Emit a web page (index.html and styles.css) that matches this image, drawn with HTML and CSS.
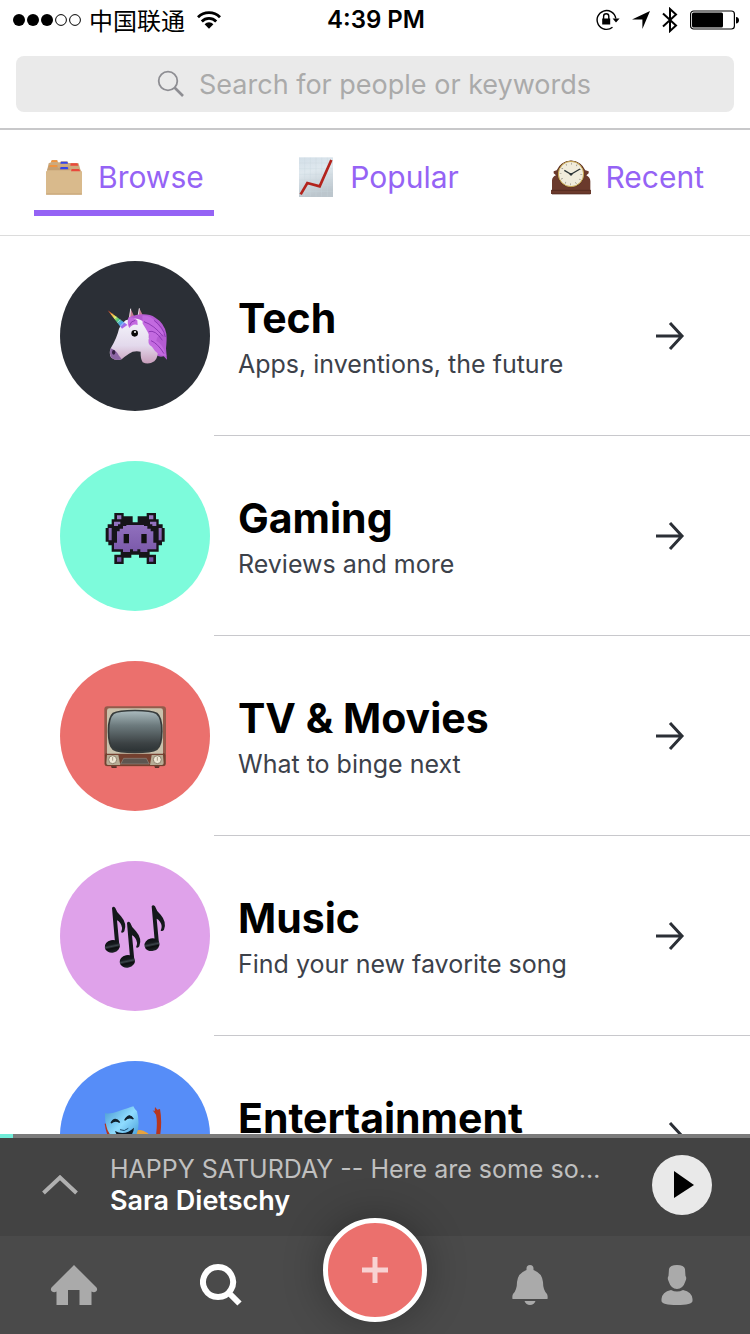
FILE: index.html
```html
<!DOCTYPE html>
<html lang="en">
<head>
    <meta charset="UTF-8">
    <meta name="viewport" content="width=device-width, initial-scale=1.0">
    <title>Browse</title>
    <link rel="stylesheet" href="styles.css">
</head>
<body>
    <!-- status bar -->
    <div class="status">
        <div class="status-left">
            <svg width="68" height="12" viewBox="0 0 68 12">
                <circle cx="6" cy="6" r="6"/>
                <circle cx="20" cy="6" r="6"/>
                <circle cx="34" cy="6" r="6"/>
                <circle cx="48" cy="6" r="5.4" fill="none" stroke="#000"/>
                <circle cx="62" cy="6" r="5.4" fill="none" stroke="#000"/>
            </svg>
            <span class="carrier" lang="zh-CN">中国联通</span>
            <svg width="24" height="20" viewBox="0 0 24 20">
                <path d="M1 7.2a15.6 15.6 0 0 1 22 0M4.8 11.4a10.2 10.2 0 0 1 14.4 0" fill="none" stroke="#000" stroke-width="2.8"/>
                <path d="M7.6 14.2a6.2 6.2 0 0 1 8.8 0L12 18.8z"/>
            </svg>
        </div>
        <span class="time">4:39 PM</span>
        <div class="status-right">
            <svg width="24" height="22" viewBox="0 0 24 22">
                <path d="M16.5 18.2A9.4 9.4 0 1 1 19.8 9.5" fill="none" stroke="#000" stroke-width="1.4"/>
                <path d="M16.6 9.4H23.6L20 13.4zM6.2 9.4h8v6h-8z"/>
                <path d="M7.6 10V7.4a2.6 2.6 0 0 1 5.2 0V10" fill="none" stroke="#000" stroke-width="1.4"/>
            </svg>
            <svg width="18" height="18" viewBox="0 0 18 18">
                <path d="M18 0L10.400 18V8.600H0z"/>
            </svg>
            <svg width="16" height="26" viewBox="0 0 16 26">
                <path d="M1 6.500L14 18.500L8 24V2L14 7.500L1 19.500" fill="none" stroke="#000" stroke-width="2"/>
            </svg>
            <svg width="49" height="20" viewBox="0 0 49 20">
                <rect x=".6" y="1" width="43.800" height="18" rx="3" fill="none" stroke="#000" stroke-width="1.200"/>
                <rect x="2" y="2.500" width="31" height="15" rx="1.500"/>
                <path d="M46 7c4 0 4 6.500 0 6.500z"/>
            </svg>
        </div>
    </div>

    <!-- search -->
    <div class="search">
        <label class="search-box">
            <svg width="28" height="28" viewBox="0 0 28 28" fill="none" stroke="#8e8e93">
                <circle cx="11" cy="11" r="9.300" stroke-width="1.800"/>
                <path d="M17.500 17.500L26 26" stroke-width="2.600"/>
            </svg>
            <input type="text" placeholder="Search for people or keywords" aria-label="Search">
        </label>
    </div>

    <!-- tabs -->
    <nav class="tabs">
        <a href="#" class="tab current">
            <svg viewBox="129 81 120 120">
                <path d="M150 97L153 90H168L171 97H177L180 94H199L202 99H232L235 107L239 122H138L143 100z" fill="#cdaa7d"/>
                <path d="M138 122L144 106H168L171 114H174L178 110H202L207 119H238L243 128H135z" fill="#c49f72"/>
                <path d="M135 126L139 121H239L243 126V194H135z" fill="#d9ba8c"/>
                <path d="M152 91h17v5h-19zM147 105h22v6h-25z" fill="#ef9440"/>
                <path d="M180 95h19l2 6h-23zM179 111h21l2 7h-25z" fill="#3344ec"/>
                <path d="M209 100h20l3 7h-24zM212 117h22l4 7h-28z" fill="#e9483b"/>
                <path d="M136 192h106" stroke="#c5a478" stroke-width="3"/>
            </svg>
            <span>Browse</span>
        </a>
        <a href="#" class="tab">
            <svg viewBox="891 81 120 120">
                <defs>
                    <linearGradient id="paper" x1="0" y1="0" x2="0.2" y2="1">
                        <stop offset="0" stop-color="#d3dfe8"/>
                        <stop offset=".4" stop-color="#dfe8ee"/>
                        <stop offset="1" stop-color="#bcc6cd"/>
                    </linearGradient>
                </defs>
                <rect x="900" y="82" width="102" height="119" fill="url(#paper)"/>
                <path d="M917 83V200M934 83V200M951 83V200M968 83V200M985 83V200M901 99H1001M901 116H1001M901 133H1001M901 150H1001M901 167H1001M901 184H1001" stroke="#c9d5dd" stroke-width="1"/>
                <path d="M905 193L925 159L962 169L997 90" fill="none" stroke="#b3231c" stroke-width="8"/>
            </svg>
            <span>Popular</span>
        </a>
        <a href="#" class="tab">
            <svg viewBox="522 81 120 120">
                <path d="M522 181L525 179V151Q526 140 537 136L530 130V124L539 121A46 46 0 0 1 625 121L635 124V130L628 136Q640 142 640 154V179L642 181V192H522z" fill="#6b3a2c"/>
                <path d="M523 181H641M525 192H640" stroke="#4a241b" stroke-width="2"/>
                <circle cx="582" cy="132" r="40" fill="#4f2b1d"/>
                <circle cx="582" cy="132" r="38" fill="#f1ecdc" stroke="#c6a44c" stroke-width="3"/>
                <circle cx="582" cy="132" r="31" fill="none" stroke="#77736a" stroke-width="6" stroke-dasharray="1.500 14.730"/>
                <path d="M562 121L582 133L609 117" fill="none" stroke="#2c3436" stroke-width="4"/>
                <circle cx="582" cy="133" r="4" fill="#2c3436"/>
            </svg>
            <span>Recent</span>
        </a>
    </nav>

    <!-- categories -->
    <ul class="list">
        <li>
            <a href="#" class="row">
                <span class="circle tech">
                    <svg viewBox="24 27 192 192">
                        <defs>
                            <linearGradient id="horn" x1="0" y1="0" x2="1" y2="1">
                                <stop offset="0" stop-color="#d92c2c"/>
                                <stop offset=".2" stop-color="#f09a35"/>
                                <stop offset=".35" stop-color="#ece85a"/>
                                <stop offset=".5" stop-color="#59cf77"/>
                                <stop offset=".7" stop-color="#4fa4f2"/>
                                <stop offset=".85" stop-color="#b45be6"/>
                                <stop offset="1" stop-color="#fff"/>
                            </linearGradient>
                            <linearGradient id="neck" x1="0" y1="0" x2="0" y2="1">
                                <stop offset="0" stop-color="#f5f6fb"/>
                                <stop offset=".6" stop-color="#e3d9ec"/>
                                <stop offset="1" stop-color="#c79dba"/>
                            </linearGradient>
                        </defs>
                        <path d="M101 70L107 41L121 72zM128 75L133 40L146 66L143 84z" fill="#c37b92"/>
                        <path d="M107 41L104 68M133 40L128 70" stroke="#e9e2ea" stroke-width="3"/>
                        <path d="M100 68Q150 48 181 68Q208 84 214 116Q216 132 213 160L216 194L206 184Q180 190 171 160L158 128L120 84z" fill="#b45bd2"/>
                        <path d="M92 76Q125 62 148 82Q164 97 161 128Q168 150 188 164Q191 186 178 199Q160 211 143 202Q136 190 137 170Q116 166 102 176Q88 185 80 193Q62 198 49 188Q40 176 48 158Q66 128 72 101Q80 84 92 76z" fill="url(#neck)"/>
                        <path d="M47 160Q64 166 72 182L80 192Q66 199 50 189Q42 178 47 160z" fill="#8c65a4"/>
                        <ellipse cx="56" cy="172" rx="5" ry="7" fill="#352044"/>
                        <path d="M38 46L98 90L81 101z" fill="url(#horn)"/>
                        <path d="M50 59L53 56M58 70L64 65M67 83L76 74M76 94L87 82" stroke="#fff" stroke-width="2" opacity=".7"/>
                        <path d="M100 68Q112 64 127 76L128 90Q114 84 103 99Q95 84 100 68zM142 62Q168 60 184 83Q200 104 211 118Q185 116 184 138Q202 145 214 182Q188 184 171 155Q154 148 164 122Q152 99 143 86z" fill="#c36ae0"/>
                        <path d="M104 91Q107 78 121 76M147 80Q178 91 204 124M161 110Q181 103 202 136M168 137Q188 145 207 176M177 76Q205 97 211 126" fill="none" stroke="#8e39b5" stroke-width="3"/>
                        <circle cx="119" cy="115" r="10" fill="#080808"/>
                        <circle cx="120" cy="111" r="3" fill="#fff"/>
                    </svg>
                </span>
                <span class="info">
                    <span class="text">
                        <strong>Tech</strong>
                        <small>Apps, inventions, the future</small>
                    </span>
                    <svg class="arrow" viewBox="0 0 30 30"><path d="M1 15H27M15 2L27 15L15 28"/></svg>
                </span>
            </a>
        </li>
        <li>
            <a href="#" class="row">
                <span class="circle gaming">
                    <svg viewBox="39 42 192 192">
                        <defs>
                            <linearGradient id="alien" x1="0" y1="0" x2="0" y2="1">
                                <stop offset="0" stop-color="#9878c4"/>
                                <stop offset="1" stop-color="#7351a3"/>
                            </linearGradient>
                        </defs>
                        <path d="M73 69H101V79H128V97H143V79H170V69H198V88H206V103H218V114H224V155H216V166H206V185H179V194H198V222H170V203H147V194H124V203H101V222H73V194H92V185H65V166H55V155H47V114H53V103H65V88H73z" fill="#161419"/>
                        <path d="M81 76H94V88H81zM177 76H190V88H177zM72 95H91V103H84V108H72zM180 95H199V108H187V103H180zM56 114H65V151H56zM206 114H215V151H206zM81 202H94V215H81zM177 202H190V215H177zM109 105H162V108H172V116H182V124H190V158H199V178H172V186H151V178H142V184H129V178H120V186H99V178H72V158H81V124H89V116H99V108H109z" fill="url(#alien)"/>
                        <path d="M101 132H117V160H101zM154 132H170V160H154z" fill="#111"/>
                    </svg>
                </span>
                <span class="info">
                    <span class="text">
                        <strong>Gaming</strong>
                        <small>Reviews and more</small>
                    </span>
                    <svg class="arrow" viewBox="0 0 30 30"><path d="M1 15H27M15 2L27 15L15 28"/></svg>
                </span>
            </a>
        </li>
        <li>
            <a href="#" class="row">
                <span class="circle movies">
                    <svg viewBox="39 42 192 192">
                        <defs>
                            <linearGradient id="screen" x1="0" y1="0" x2="0" y2="1">
                                <stop offset="0" stop-color="#a9b9bd"/>
                                <stop offset=".35" stop-color="#6d7b7e"/>
                                <stop offset=".8" stop-color="#3c4244"/>
                                <stop offset="1" stop-color="#2c3335"/>
                            </linearGradient>
                        </defs>
                        <path d="M62 225H80V234H65zM192 225H210L207 234H195z" fill="#5d3029"/>
                        <rect x="43" y="49" width="185" height="180" rx="9" fill="#925b4b"/>
                        <rect x="45" y="189" width="181" height="39" rx="7" fill="#74402f"/>
                        <path d="M58 55H212Q219 55 219 62V191H51V62Q51 55 58 55z" fill="#c9c1ac"/>
                        <path d="M135 59Q186 59 202 68Q218 80 218 123Q218 167 202 180Q186 190 135 190Q84 190 68 180Q53 167 53 123Q53 80 68 68Q84 59 135 59z" fill="#363b3b"/>
                        <path d="M135 64Q183 64 198 72Q213 84 213 123Q213 163 198 175Q184 184 135 184Q86 184 72 175Q58 163 58 123Q58 84 72 72Q86 64 135 64z" fill="url(#screen)"/>
                        <path d="M51 195H85L91 225H54Q49 225 49 219zM185 195H219L221 219Q221 225 216 225H180z" fill="#b6ac95"/>
                        <path d="M101 205H169L178 222H92z" fill="#5d5550" stroke="#94857b" stroke-width="2"/>
                        <circle cx="68" cy="209" r="12" fill="#eee7d5" stroke="#8d816d" stroke-width="3"/>
                        <circle cx="202" cy="209" r="12" fill="#eee7d5" stroke="#8d816d" stroke-width="3"/>
                        <path d="M68 201V212M202 201V212" stroke="#a69a84" stroke-width="3"/>
                    </svg>
                </span>
                <span class="info">
                    <span class="text">
                        <strong>TV &amp; Movies</strong>
                        <small>What to binge next</small>
                    </span>
                    <svg class="arrow" viewBox="0 0 30 30"><path d="M1 15H27M15 2L27 15L15 28"/></svg>
                </span>
            </a>
        </li>
        <li>
            <a href="#" class="row">
                <span class="circle music">
                    <svg viewBox="39 42 192 192">
                        <defs>
                            <linearGradient id="note" x1="0" y1="0" x2="0" y2="1">
                                <stop offset="0" stop-color="#0a0d10"/>
                                <stop offset=".35" stop-color="#161a1e"/>
                                <stop offset=".5" stop-color="#3c454b"/>
                                <stop offset=".65" stop-color="#0a0c0e"/>
                                <stop offset="1" stop-color="#20262a"/>
                            </linearGradient>
                            <g id="quaver">
                                <path d="M66 54Q70 47 76 54Q80 68 93 79Q112 101 103 124Q99 130 93 127Q100 113 91 100Q86 93 81 91L88 166L76 168z" fill="#14181b"/>
                                <ellipse cx="67" cy="169" rx="23" ry="19" transform="rotate(-12 67 169)" fill="url(#note)"/>
                            </g>
                        </defs>
                        <use href="#quaver"/>
                        <use href="#quaver" x="119" y="-5"/>
                        <use href="#quaver" x="45" y="45"/>
                    </svg>
                </span>
                <span class="info">
                    <span class="text">
                        <strong>Music</strong>
                        <small>Find your new favorite song</small>
                    </span>
                    <svg class="arrow" viewBox="0 0 30 30"><path d="M1 15H27M15 2L27 15L15 28"/></svg>
                </span>
            </a>
        </li>
        <li>
            <a href="#" class="row">
                <span class="circle fun">
                    <svg viewBox="309 162 192 192">
                        <defs>
                            <linearGradient id="mask" x1="0" y1="0" x2="1" y2="1">
                                <stop offset="0" stop-color="#4796cf"/>
                                <stop offset=".5" stop-color="#8fdcff"/>
                                <stop offset="1" stop-color="#368fd0"/>
                            </linearGradient>
                        </defs>
                        <path d="M314 221Q317 245 330 275L340 272L322 220zM458 181L464 184L465 171L472 179L480 177Q488 220 478 270H466Q474 220 468 194z" fill="#b63620"/>
                        <path d="M400 246Q418 232 444 250L462 290H390z" fill="#e9a33c"/>
                        <path d="M315 188Q324 195 355 184Q387 173 400 169Q405 180 411 184Q421 225 410 252Q390 285 360 276Q325 260 319 228Q314 208 315 188z" fill="url(#mask)"/>
                        <path d="M333 219Q345 198 359 217Q345 208 333 219zM374 211Q388 186 400 207Q387 199 374 211z" fill="#10202c" stroke="#10202c" stroke-width="4"/>
                        <path d="M360 239Q373 246 385 235" fill="none" stroke="#19476a" stroke-width="3"/>
                        <path d="M345 243Q375 258 402 233Q399 265 370 264Q350 260 345 243z" fill="#0e1a26"/>
                    </svg>
                </span>
                <span class="info">
                    <span class="text">
                        <strong>Entertainment</strong>
                    </span>
                    <svg class="arrow" viewBox="0 0 30 30"><path d="M1 15H27M15 2L27 15L15 28"/></svg>
                </span>
            </a>
        </li>
    </ul>

    <!-- player -->
    <div class="player">
        <div class="progress"><div class="played"></div></div>
        <div class="player-inner">
            <button type="button" class="expand" aria-label="Expand">
                <svg width="36" height="20" viewBox="0 0 36 20"><path d="M1.500 18L18 2.500L34.500 18" fill="none" stroke="#b0b0b0" stroke-width="4"/></svg>
            </button>
            <div class="playing">
                <p class="track">HAPPY SATURDAY -- Here are some so…</p>
                <p class="artist">Sara Dietschy</p>
            </div>
            <button type="button" class="play" aria-label="Play">
                <svg width="20" height="28" viewBox="0 0 20 28"><path d="M0 0L20 14L0 27z"/></svg>
            </button>
        </div>
    </div>

    <!-- bottom bar -->
    <nav class="bar">
        <a href="#" aria-label="Home">
            <svg width="48" height="40" viewBox="0 0 48 40"><path d="M24 0L46.500 22.500Q48 25 46 26.500Q44 28 41.500 26.500V40H29.500V25H18V40H6.500V26.500Q4 28 2 26.500Q0 25 1.500 22.500z"/></svg>
        </a>
        <a href="#" aria-label="Search">
            <svg width="42" height="42" viewBox="0 0 42 42"><path d="M18 3a15 15 0 1 0 .1 0zM28.500 28.500L39.500 39.500" fill="none" stroke="#fff" stroke-width="6"/></svg>
        </a>
        <button type="button" class="add" aria-label="Add">
            <svg width="28" height="28" viewBox="0 0 28 28"><path d="M14 1V27M1 14H27" stroke="#f8d2d2" stroke-width="5"/></svg>
        </button>
        <a href="#" aria-label="Notifications">
            <svg width="36" height="40" viewBox="0 0 36 40"><path d="M14.500 5V3.500a3.500 3.500 0 0 1 7 0V5Q30 8 31 17Q31 25 35 29Q36 31 35.500 34H.5Q0 31 1 29Q5 25 5 17Q6 8 14.500 5zM12.500 36H23.500Q22 40 18 40Q14 40 12.500 36z"/></svg>
        </a>
        <a href="#" aria-label="Profile">
            <svg width="32" height="40" viewBox="0 0 32 40"><path d="M8 4Q9 0 16 0Q23 0 24 4L24.500 11Q26 13 24.500 16Q22 24 16 24Q10 24 7.500 16Q6 13 7.500 11zM10 25Q16 28 22 25Q31 27 31.500 34V36Q31 40 16 40Q1 40 .5 36V34Q1 27 10 25z"/></svg>
        </a>
    </nav>
</body>
</html>
```

FILE: styles.css
```css
/* reset */
*{
    margin: 0;
    padding: 0;
    box-sizing: border-box;
}

ul{
    list-style: none;
}

a{
    color: inherit;
    text-decoration: none;
}

button{
    border: none;
    background: none;
    cursor: pointer;
}

svg{
    display: block;
    flex: none;
}

body{
    height: 100vh;
    display: flex;
    flex-direction: column;
    overflow: hidden;
    background-color: #fff;
    color: #000;
    font-family: Inter, "Noto Sans CJK SC", sans-serif;
}

/* status bar */
.status{
    height: 40px;
    padding: 0 11px 0 13px;
    display: grid;
    grid-template-columns: 1fr auto 1fr;
    align-items: center;
    font-size: 24px;
    line-height: 40px;
}

.status-left,
.status-right{
    display: flex;
    align-items: center;
}

.status-left{
    gap: 8px;
}

.status-right{
    justify-content: flex-end;
    gap: 12px;
}

.carrier{
    margin-right: 4px;
    font-family: "Noto Sans CJK SC", sans-serif;
}

.time{
    font-weight: 600;
}

/* search */
.search{
    padding: 16px;
    border-bottom: 2px solid #c8c8ca;
}

.search-box{
    height: 56px;
    display: flex;
    align-items: center;
    justify-content: center;
    gap: 14px;
    border-radius: 8px;
    background-color: #eaeaea;
}

.search-box input{
    width: 394px;
    border: none;
    outline: none;
    background: none;
    font-family: inherit;
    font-size: 27px;
}

.search-box input::placeholder{
    color: #aaa;
}

/* tabs */
.tabs{
    padding: 0 36px 19px 34px;
    display: flex;
    justify-content: space-between;
    border-bottom: 1px solid #dcdcdc;
}

.tab{
    padding: 27px 10px 13px;
    display: flex;
    align-items: center;
    gap: 14px;
    border-bottom: 6px solid transparent;
    color: #9563f5;
    font-size: 30px;
    line-height: 40px;
}

.tab svg{
    width: 40px;
    height: 40px;
}

.tab.current{
    border-color: #9563f5;
}

/* categories */
.list{
    flex: 1;
    min-height: 0;
    overflow: hidden;
}

.row{
    height: 200px;
    padding-left: 60px;
    display: flex;
    align-items: center;
    gap: 4px;
}

.circle{
    width: 150px;
    height: 150px;
    flex: none;
    display: flex;
    align-items: center;
    justify-content: center;
    border-radius: 50%;
}

.circle svg{
    width: 64px;
    height: 64px;
}

.tech{
    background-color: #2b2f36;
}

.gaming{
    background-color: #7dfbdb;
}

.movies{
    background-color: #eb706d;
}

.music{
    background-color: #dfa2ea;
}

.fun{
    background-color: #568df8;
}

.info{
    height: 100%;
    flex: 1;
    padding: 0 65px 0 24px;
    display: flex;
    align-items: center;
    justify-content: space-between;
    border-bottom: 1px solid #c8c8cc;
}

.text{
    min-height: 92px;
}

.text strong,
.text small{
    display: block;
}

.text strong{
    font-size: 41px;
    line-height: 56px;
    font-weight: 700;
}

.text small{
    color: #3c414a;
    font-size: 25px;
    line-height: 36px;
}

.arrow{
    width: 30px;
    height: 30px;
    fill: none;
    stroke: #2b2f36;
    stroke-width: 3;
}

/* player */
.player{
    background-color: #434343;
    color: #fff;
}

.progress{
    height: 4px;
    background-color: #7b7b7b;
}

.played{
    width: 13px;
    height: 4px;
    background-color: #70ecd8;
}

.player-inner{
    height: 98px;
    padding: 0 38px 4px 42px;
    display: flex;
    align-items: center;
}

.playing{
    flex: 1;
    min-width: 0;
    padding: 0 32px;
    font-size: 25px;
    line-height: 31px;
}

.track{
    overflow: hidden;
    white-space: nowrap;
    text-overflow: ellipsis;
    color: #c0c0c0;
}

.artist{
    font-size: 27px;
    font-weight: 600;
}

.play{
    width: 60px;
    height: 60px;
    padding-left: 4px;
    display: flex;
    align-items: center;
    justify-content: center;
    border-radius: 50%;
    background-color: #e9e9e9;
}

/* bottom bar */
.bar{
    height: 98px;
    display: grid;
    grid-template-columns: 1fr 1fr 162px 1fr 1fr;
    align-items: center;
    justify-items: center;
    background-color: #4a4a4a;
}

.bar svg{
    fill: #aaa;
}

/* round button, sticks out over the player */
.add{
    width: 104px;
    height: 104px;
    margin-top: -30px;
    display: flex;
    align-items: center;
    justify-content: center;
    border: 5px solid #fff;
    border-radius: 50%;
    background-color: #eb706d;
    box-shadow: 0 0 40px rgba(0, 0, 0, .3);
}
```
